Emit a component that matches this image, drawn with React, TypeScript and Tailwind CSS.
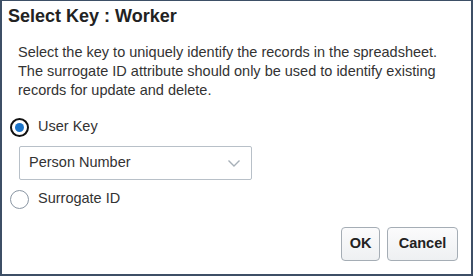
import React from "react";

export default function App() {
  return (
    <div
      className="w-[473px] h-[276px] bg-white border-l-2 border-r-2 border-t border-b-2 border-[#3d4f66] flex flex-col text-[#333333] overflow-hidden"
      style={{ fontFamily: '"Liberation Sans", Arial, sans-serif' }}
    >
      <div className="pl-[6px] pt-[4px] h-[34px] text-[18px] font-bold text-[#222222] leading-[22px]">
        Select Key : Worker
      </div>
      <div className="px-[16px] pt-[8px] text-[14.5px] leading-[19px] text-[#333]">
        Select the key to uniquely identify the records in the spreadsheet. The surrogate ID attribute should only be used to identify existing records for update and delete.
      </div>
      <div className="pl-[8px] pt-[17px] flex flex-col">
        <label className="flex items-center gap-[9px] h-[20px]">
          <span className="w-[19px] h-[19px] rounded-full border-[2px] border-[#111] flex items-center justify-center">
            <span className="w-[9px] h-[9px] rounded-full bg-[#1a73c9]" />
          </span>
          <span className="text-[14.5px]">User Key</span>
        </label>
        <div className="ml-[9px] mt-[9px] w-[233px] h-[34px] border border-[#b8c0c8] rounded-[2px] flex items-center justify-between pl-[9px] pr-[10px]">
          <span className="text-[14.5px] text-[#333]">Person Number</span>
          <svg width="14" height="9" viewBox="0 0 14 9" fill="none">
            <path d="M1.5 1.5 L7 7 L12.5 1.5" stroke="#a7b0b8" strokeWidth="1.4" />
          </svg>
        </div>
        <label className="flex items-center gap-[9px] h-[20px] mt-[9px]">
          <span className="w-[19px] h-[19px] rounded-full border border-[#8a96a3]" />
          <span className="text-[14.5px]">Surrogate ID</span>
        </label>
      </div>
      <div className="flex justify-end gap-[7px] pr-[13px] mt-[18px]">
        <button className="h-[34px] w-[39px] border border-[#a5adb5] rounded-[4px] bg-gradient-to-b from-[#fbfbfc] to-[#eef0f2] text-[14.5px] font-bold text-[#222]">
          OK
        </button>
        <button className="h-[34px] w-[71px] border border-[#a5adb5] rounded-[4px] bg-gradient-to-b from-[#fbfbfc] to-[#eef0f2] text-[14.5px] font-bold text-[#222]">
          Cancel
        </button>
      </div>
    </div>
  );
}
